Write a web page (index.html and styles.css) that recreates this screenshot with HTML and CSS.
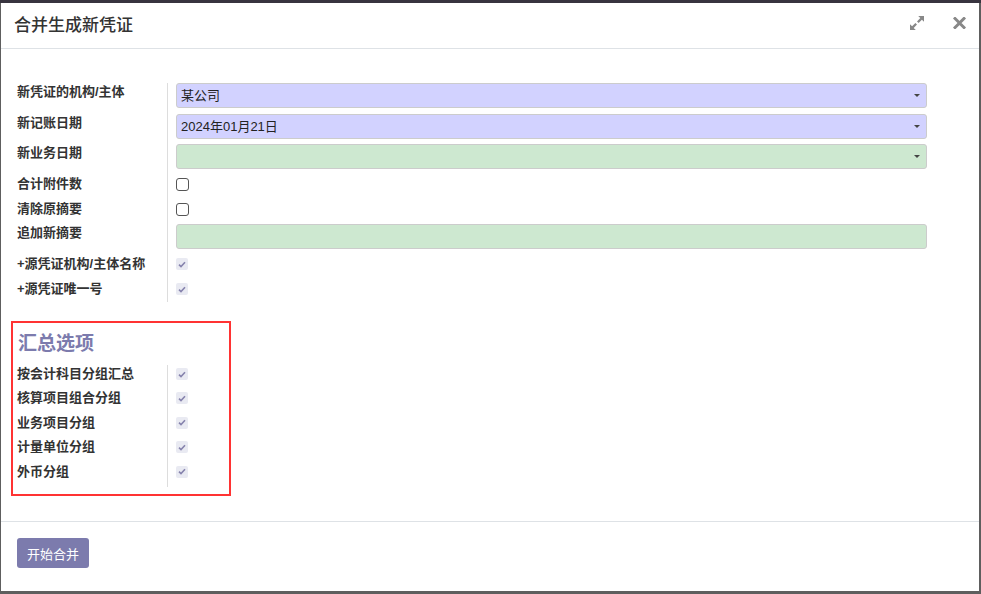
FILE: index.html
```html
<!DOCTYPE html>
<html lang="zh">
<head>
<meta charset="utf-8">
<title>合并生成新凭证</title>
<link rel="stylesheet" href="styles.css">
</head>
<body>
<div class="modal">
  <div class="modal-header">
    <h4 class="modal-title">合并生成新凭证</h4>
    <div class="header-actions">
      <svg class="icon-expand" width="16" height="16" viewBox="0 0 16 16">
        <path d="M9.2 1 H15 V6.8 L12.9 4.7 L9.6 8 L8 6.4 L11.3 3.1 Z" fill="#888"/>
        <path d="M6.8 15 H1 V9.2 L3.1 11.3 L6.4 8 L8 9.6 L4.7 12.9 Z" fill="#888"/>
      </svg>
      <svg class="icon-close" width="13" height="12" viewBox="0 0 13 12">
        <path d="M2 1.5 L11 10.5 M11 1.5 L2 10.5" stroke="#888" stroke-width="3" stroke-linecap="square"/>
      </svg>
    </div>
  </div>
  <div class="modal-body">
    <div class="form-group">
      <div class="row r31">
        <div class="label">新凭证的机构/主体</div>
        <div class="field"><div class="input select req">某公司<span class="caret"></span></div></div>
      </div>
      <div class="row r30">
        <div class="label">新记账日期</div>
        <div class="field"><div class="input select req">2024年01月21日<span class="caret"></span></div></div>
      </div>
      <div class="row r31">
        <div class="label">新业务日期</div>
        <div class="field"><div class="input select opt"><span class="caret"></span></div></div>
      </div>
      <div class="row r25">
        <div class="label">合计附件数</div>
        <div class="field"><span class="cb"></span></div>
      </div>
      <div class="row r24">
        <div class="label">清除原摘要</div>
        <div class="field"><span class="cb"></span></div>
      </div>
      <div class="row r31">
        <div class="label">追加新摘要</div>
        <div class="field"><div class="input opt"></div></div>
      </div>
      <div class="row r25">
        <div class="label">+源凭证机构/主体名称</div>
        <div class="field"><span class="cb-on"><svg width="8" height="7" viewBox="0 0 8 7"><path d="M1 3.6 L3 5.5 L7 1.2" stroke="#8683ad" stroke-width="1.6" fill="none"/></svg></span></div>
      </div>
      <div class="row r22">
        <div class="label">+源凭证唯一号</div>
        <div class="field"><span class="cb-on"><svg width="8" height="7" viewBox="0 0 8 7"><path d="M1 3.6 L3 5.5 L7 1.2" stroke="#8683ad" stroke-width="1.6" fill="none"/></svg></span></div>
      </div>
    </div>

    <div class="summary">
      <div class="summary-title">汇总选项</div>
      <div class="form-group">
        <div class="row r245">
          <div class="label">按会计科目分组汇总</div>
          <div class="field"><span class="cb-on"><svg width="8" height="7" viewBox="0 0 8 7"><path d="M1 3.6 L3 5.5 L7 1.2" stroke="#8683ad" stroke-width="1.6" fill="none"/></svg></span></div>
        </div>
        <div class="row r245">
          <div class="label">核算项目组合分组</div>
          <div class="field"><span class="cb-on"><svg width="8" height="7" viewBox="0 0 8 7"><path d="M1 3.6 L3 5.5 L7 1.2" stroke="#8683ad" stroke-width="1.6" fill="none"/></svg></span></div>
        </div>
        <div class="row r245">
          <div class="label">业务项目分组</div>
          <div class="field"><span class="cb-on"><svg width="8" height="7" viewBox="0 0 8 7"><path d="M1 3.6 L3 5.5 L7 1.2" stroke="#8683ad" stroke-width="1.6" fill="none"/></svg></span></div>
        </div>
        <div class="row r245">
          <div class="label">计量单位分组</div>
          <div class="field"><span class="cb-on"><svg width="8" height="7" viewBox="0 0 8 7"><path d="M1 3.6 L3 5.5 L7 1.2" stroke="#8683ad" stroke-width="1.6" fill="none"/></svg></span></div>
        </div>
        <div class="row r24">
          <div class="label">外币分组</div>
          <div class="field"><span class="cb-on"><svg width="8" height="7" viewBox="0 0 8 7"><path d="M1 3.6 L3 5.5 L7 1.2" stroke="#8683ad" stroke-width="1.6" fill="none"/></svg></span></div>
        </div>
      </div>
    </div>
  </div>
  <div class="modal-footer">
    <button class="btn-primary">开始合并</button>
  </div>
</div>
</body>
</html>
```

FILE: styles.css
```css
html, body {
  margin: 0;
  padding: 0;
}
body {
  background: #5e5e5e;
  font-family: "Liberation Sans", "Noto Sans CJK SC", sans-serif;
  color: #333;
  width: 981px;
  height: 594px;
  overflow: hidden;
  border-top: 3px solid #38343f;
  box-sizing: border-box;
}
.modal {
  margin-left: 1px;
  width: 978px;
  height: 588px;
  background: #fff;
  display: flex;
  flex-direction: column;
}
.modal-header {
  height: 45px;
  border-bottom: 1px solid #dee2e6;
  display: flex;
  align-items: center;
  justify-content: space-between;
  padding: 0 13px;
  flex: none;
}
.modal-title {
  margin: 0;
  font-size: 17px;
  font-weight: 500;
  color: #333;
  font-family: "Noto Sans CJK SC", sans-serif;
  position: relative;
  top: -2px;
}
.header-actions {
  display: flex;
  align-items: center;
  gap: 28px;
  position: relative;
  top: -3px;
}
.icon-close { display: block; }
.icon-expand { display: block; }

.modal-body {
  flex: 1;
  padding: 34px 52px 0 16px;
}
.row {
  display: flex;
  align-items: stretch;
}
.r31 { height: 31px; }
.r30 { height: 30px; }
.r25 { height: 25px; }
.r24 { height: 24px; }
.r22 { height: 22px; }
.r245 { height: 24.4px; }
.label {
  width: 150px;
  flex: none;
  font-size: 13px;
  font-weight: 700;
  line-height: 18px;
  color: #333;
  white-space: nowrap;
}
.field {
  flex: 1;
  border-left: 1px solid #ddd;
  padding-left: 8px;
}
.input {
  height: 25px;
  box-sizing: border-box;
  border: 1px solid #ccc;
  border-radius: 3px;
  font-size: 13px;
  line-height: 23px;
  padding-left: 4px;
  color: #222;
  position: relative;
}
.req { background: #d2d2ff; }
.opt { background: #cde8d0; }
.caret {
  position: absolute;
  right: 6px;
  top: 10px;
  width: 0;
  height: 0;
  border-left: 3px solid transparent;
  border-right: 3px solid transparent;
  border-top: 3px solid #444;
}
.cb {
  display: block;
  margin-top: 3px;
  width: 13px;
  height: 13px;
  box-sizing: border-box;
  border: 1.5px solid #555;
  border-radius: 3px;
  background: #fff;
}
.cb-on {
  display: flex;
  align-items: center;
  justify-content: center;
  margin-top: 3px;
  width: 12px;
  height: 12px;
  border-radius: 2px;
  background: #e9eaf2;
}
.summary {
  margin: 19px 0 0 -6px;
  width: 212px;
  border: 2px solid #ff3333;
  padding: 7px 0 7px 4px;
}
.summary-title {
  font-size: 19px;
  font-weight: 700;
  color: #7c7bad;
  line-height: 24px;
  margin: 0 0 11px 1px;
  font-family: "Noto Sans CJK SC", sans-serif;
}
.modal-footer {
  flex: none;
  height: 70px;
  border-top: 1px solid #dee2e6;
  padding: 16px 16px 0;
  box-sizing: border-box;
}
.btn-primary {
  width: 72px;
  height: 30px;
  background: #7c7bad;
  color: #fff;
  border: none;
  border-radius: 3px;
  font-size: 13px;
  font-family: "Noto Sans CJK SC", sans-serif;
  padding: 0;
}
```
